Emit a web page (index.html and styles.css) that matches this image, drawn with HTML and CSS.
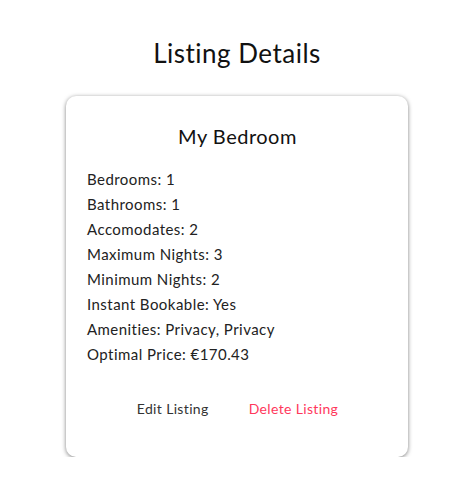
FILE: index.html
```html
<!DOCTYPE html>
<html>
<head>
<meta charset="utf-8">
<link rel="stylesheet" href="styles.css">
</head>
<body>
<div class="page">
  <h1 class="heading">Listing Details</h1>
  <div class="card">
    <h2 class="card-title">My Bedroom</h2>
    <ul class="details">
      <li>Bedrooms: 1</li>
      <li>Bathrooms: 1</li>
      <li>Accomodates: 2</li>
      <li>Maximum Nights: 3</li>
      <li>Minimum Nights: 2</li>
      <li>Instant Bookable: Yes</li>
      <li>Amenities: Privacy, Privacy</li>
      <li>Optimal Price: €170.43</li>
    </ul>
    <div class="actions">
      <a class="action edit">Edit Listing</a>
      <a class="action delete">Delete Listing</a>
    </div>
  </div>
</div>
</body>
</html>
```
FILE: styles.css
```css
html, body {
  margin: 0;
  padding: 0;
  background: #fff;
}
body {
  font-family: "Lato", "Noto Sans", sans-serif;
  color: #222;
}
.page {
  display: flex;
  flex-direction: column;
  align-items: center;
  padding: 36px 0 0 23px;
}
.heading {
  margin: 0;
  font-size: 26px;
  font-weight: 400;
  line-height: 34px;
  letter-spacing: 0.5px;
  color: #111;
}
.card {
  box-sizing: border-box;
  width: 342px;
  height: 361px;
  margin-top: 26px;
  border-radius: 10px;
  box-shadow: 0 1px 4px rgba(0,0,0,0.5);
  padding: 26px 20px 0 21px;
  display: flex;
  flex-direction: column;
}
.card-title {
  margin: 0;
  text-align: center;
  font-size: 20px;
  font-weight: 400;
  line-height: 28px;
  letter-spacing: 0.5px;
  color: #111;
}
.details {
  list-style: none;
  margin: 17px 0 0;
  padding: 0;
  font-size: 15px;
  line-height: 25px;
  letter-spacing: 0.45px;
  color: #222;
}
.actions {
  display: flex;
  justify-content: center;
  gap: 40px;
  margin-top: 32px;
  font-size: 14px;
  line-height: 20px;
  letter-spacing: 0.35px;
}
.action { cursor: pointer; }
.edit { color: #333; }
.delete { color: #ff385c; }
```
